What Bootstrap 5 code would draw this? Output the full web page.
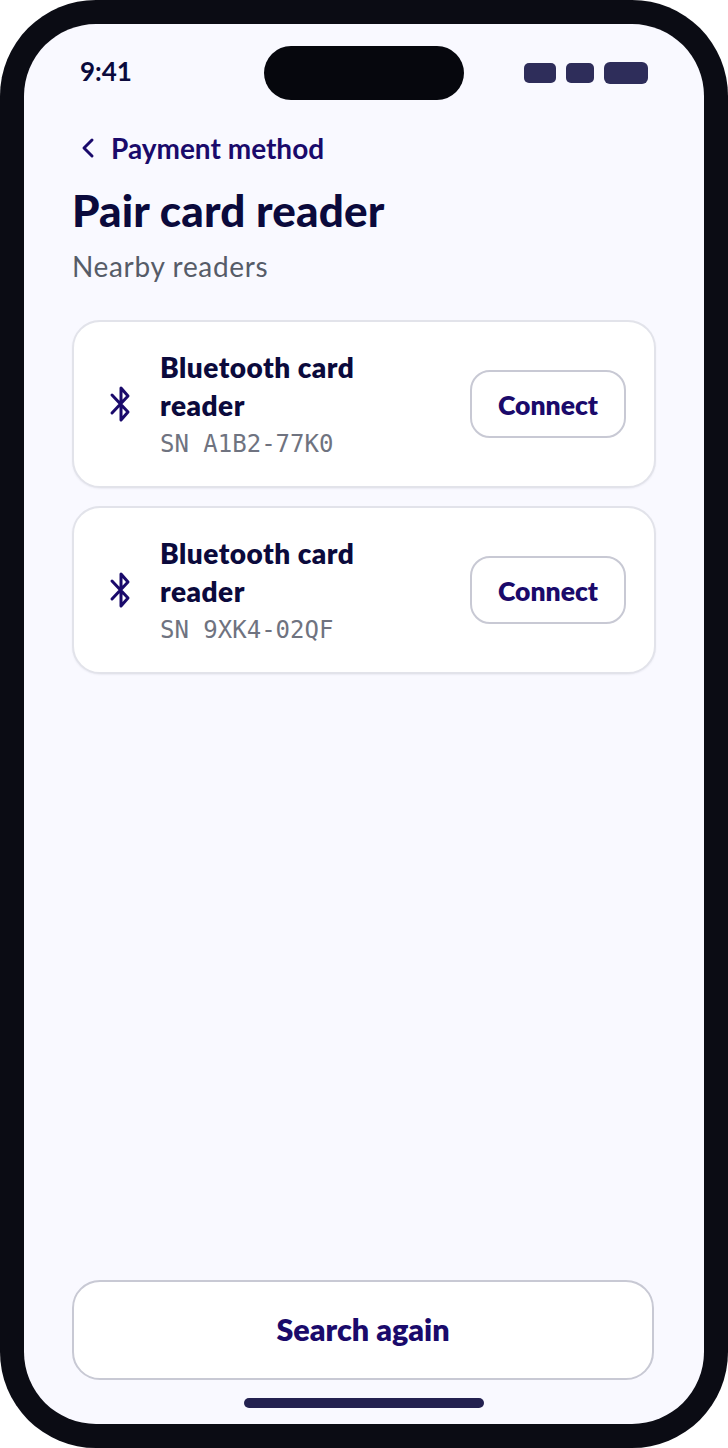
<!DOCTYPE html>
<html lang="en">
<head>
  <meta charset="UTF-8">
  <title>Pair card reader</title>
  <link href="https://cdn.jsdelivr.net/npm/bootstrap@5.3.0/dist/css/bootstrap.min.css" rel="stylesheet">
  <style>
    body { background: #fff; font-family: "Lato", "Liberation Sans", sans-serif; }
    .phone-frame { width: 728px; height: 1448px; padding: 24px; background: #0b0c14; border-radius: 96px; }
    .phone-screen { height: 1400px; background: #f9f9ff; border-radius: 72px; padding: 22px 48px 16px 48px; }
    .status-row { height: 54px; padding: 0 8px; }
    .status-time { width: 184px; padding-bottom: 3px; font-size: 26px; font-weight: 700; color: #0b0a3c; }
    .island { width: 200px; height: 54px; border-radius: 27px; background: #06070d; }
    .status-icons { margin-left: 60px; gap: 10px; }
    .sig { height: 20px; border-radius: 5px; background: #2e2d5a; }
    .sig-a { width: 32px; }
    .sig-b { width: 28px; }
    .sig-c { width: 44px; height: 22px; border-radius: 6px; }
    .back-row { margin-top: 28px; height: 40px; gap: 16px; padding-left: 9px; color: #1a0a6b; font-size: 28px; font-weight: 700; }
    .page-title { margin: 17px 0 0; font-size: 44px; line-height: 50px; letter-spacing: .15px; font-weight: 900; color: #0b0a3c; }
    .page-sub { margin: 14px 0 0; font-size: 28px; line-height: 34px; letter-spacing: .65px; color: #565c68; }
    .reader-list { margin-top: 37px; gap: 18px; }
    .reader-card { height: 168px; border: 2px solid #e2e3ea; border-radius: 28px; background: #fff; padding: 0 28px 0 33px; box-shadow: 0 1px 2px rgba(11, 10, 60, .06); }
    .reader-icon { width: 28px; height: 38px; margin-right: 25px; flex-shrink: 0; }
    .reader-text { max-width: 230px; padding-top: 4px; }
    .reader-name { font-size: 28px; line-height: 38px; letter-spacing: .5px; font-weight: 800; color: #0b0a3c; }
    .reader-sn { font-family: "DejaVu Sans Mono", monospace; font-size: 24px; line-height: 40px; color: #6f7380; }
    .btn-outline-reader { width: 156px; height: 68px; flex-shrink: 0; border: 2px solid #c8c9d4; border-radius: 20px; background: #fff; color: #1a0a6b; font-size: 26.5px; font-weight: 800; padding: 3px 0 0; }
    .btn-search { height: 100px; margin-right: 2px; padding-bottom: 6px; border: 2px solid #c8c9d4; border-radius: 28px; background: #fff; color: #1a0a6b; font-size: 30.5px; font-weight: 800; }
    .home-bar { width: 240px; height: 10px; border-radius: 5px; background: #232150; margin: 18px 0 0 172px; }
  </style>
</head>
<body class="m-0">
  <div class="phone-frame">
    <div class="phone-screen d-flex flex-column">
      <div class="status-row d-flex align-items-center">
        <div class="status-time">9:41</div>
        <div class="island"></div>
        <div class="status-icons d-flex align-items-center">
          <div class="sig sig-a"></div>
          <div class="sig sig-b"></div>
          <div class="sig sig-c"></div>
        </div>
      </div>

      <div class="back-row d-flex align-items-center">
        <svg width="14" height="22" viewBox="0 0 14 22" fill="none" stroke="#1a0a6b" stroke-width="3" stroke-linecap="round" stroke-linejoin="round"><path d="M11 3 3 11l8 8"/></svg>
        <span>Payment method</span>
      </div>
      <h1 class="page-title">Pair card reader</h1>
      <p class="page-sub">Nearby readers</p>

      <div class="reader-list d-flex flex-column">
        <div class="reader-card d-flex align-items-center">
          <svg class="reader-icon" viewBox="0 0 28 38" fill="none" stroke="#1a0a6b" stroke-width="3" stroke-linejoin="round" stroke-linecap="round"><path d="M5 10 21 27 14 35V3l7 8L5 28"/></svg>
          <div class="reader-text">
            <div class="reader-name">Bluetooth card reader</div>
            <div class="reader-sn">SN A1B2-77K0</div>
          </div>
          <button type="button" class="btn btn-outline-reader ms-auto">Connect</button>
        </div>
        <div class="reader-card d-flex align-items-center">
          <svg class="reader-icon" viewBox="0 0 28 38" fill="none" stroke="#1a0a6b" stroke-width="3" stroke-linejoin="round" stroke-linecap="round"><path d="M5 10 21 27 14 35V3l7 8L5 28"/></svg>
          <div class="reader-text">
            <div class="reader-name">Bluetooth card reader</div>
            <div class="reader-sn">SN 9XK4-02QF</div>
          </div>
          <button type="button" class="btn btn-outline-reader ms-auto">Connect</button>
        </div>
      </div>

      <button type="button" class="btn btn-search mt-auto">Search again</button>
      <div class="home-bar"></div>
    </div>
  </div>
</body>
</html>
